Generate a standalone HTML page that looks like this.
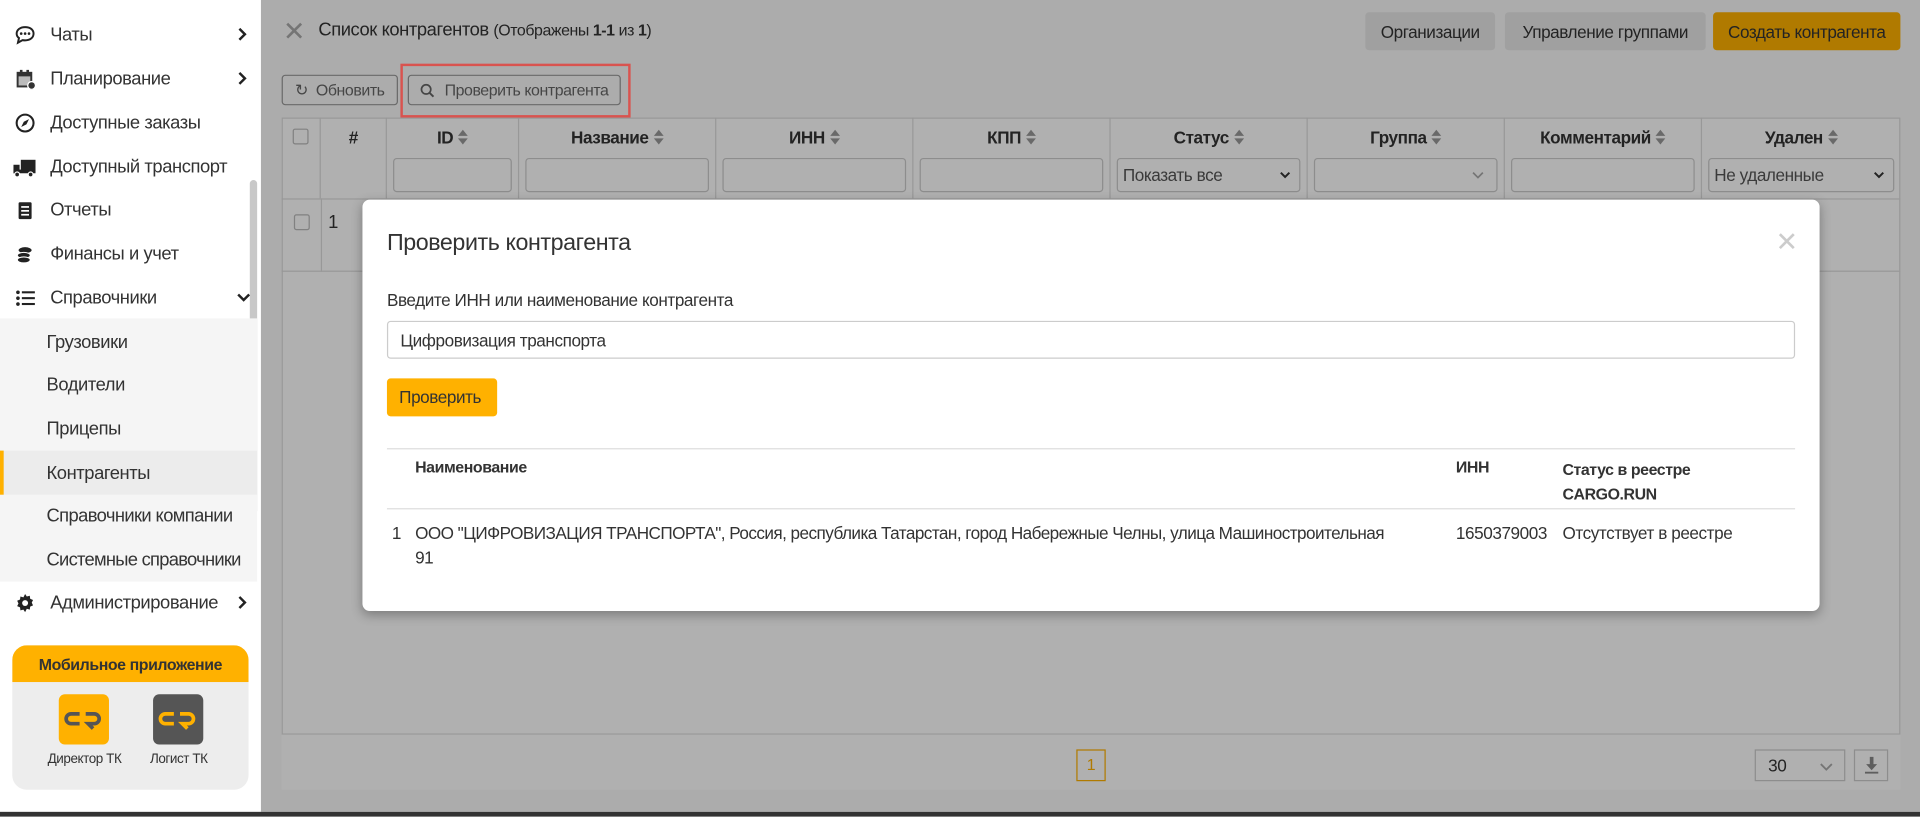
<!DOCTYPE html>
<html><head><meta charset="utf-8">
<style>
*{box-sizing:border-box;margin:0;padding:0}
html,body{width:1920px;height:817px;overflow:hidden;background:#fff;font-family:"Liberation Sans","Noto Sans CJK SC",sans-serif;color:#333}
#w{position:absolute;left:0;top:0;width:1568px;height:667px;transform:scale(1.22449);transform-origin:0 0;overflow:hidden;letter-spacing:-0.35px}
.abs{position:absolute;white-space:nowrap}
.nav{position:absolute;left:0;width:213px;height:36px;font-size:15px;color:#333;display:flex;align-items:center;white-space:nowrap}
.nav .ic{position:absolute;left:12px;width:17px;height:17px}
.nav .t{position:absolute;left:41px}
.nav .ch{position:absolute;left:194px;top:12px;width:8px;height:12px}
.sub{position:absolute;left:0;width:205px;height:36px;font-size:15px;color:#333;display:flex;align-items:center;padding-left:38px;white-space:nowrap}
.btn{position:absolute;border-radius:3px;font-size:14px;display:flex;align-items:center;justify-content:center;white-space:nowrap}
.th{position:absolute;top:96px;height:66px;border-right:1px solid #ddd;font-size:14px;font-weight:bold;color:#333;text-align:center}
.th .l{margin-top:8px}
.th .f{position:absolute;left:5px;right:5px;top:33px;height:28px;border:1px solid #ccc;border-radius:3px;background:#fff;font-size:14px;font-weight:normal;text-align:left;padding:6px 4px;color:#555}
.sort{display:inline-block;width:8px;height:12px;vertical-align:-1px;margin-left:4px;position:relative}
.sort:before{content:"";position:absolute;left:0;top:0;border:4px solid transparent;border-bottom:5px solid #999;border-top:0}
.sort:after{content:"";position:absolute;left:0;top:7px;border:4px solid transparent;border-top:5px solid #999;border-bottom:0}
</style></head><body><div id="w">

<div class="abs" style="left:213px;top:0;width:1355px;height:663px;background:#fafafa"></div>
<div class="abs" style="left:231px;top:16px;font-size:22px;color:#aaa;line-height:20px">✕</div>
<div class="abs" style="left:260px;top:16px;font-size:15px;color:#333">Список контрагентов <span style="font-size:13px">(Отображены <b>1-1</b> из <b>1</b>)</span></div>
<div class="btn" style="left:1115px;top:10px;width:106px;height:31px;background:#e8e8e8;color:#333">Организации</div>
<div class="btn" style="left:1229px;top:10px;width:164px;height:31px;background:#e8e8e8;color:#333">Управление группами</div>
<div class="btn" style="left:1399px;top:10px;width:153px;height:31px;background:#ffb100;color:#333">Создать контрагента</div>
<div class="btn" style="left:230px;top:61px;width:95px;height:25px;border:1px solid #999;font-size:13px;color:#666">↻&nbsp; Обновить</div>
<div class="btn" style="left:333px;top:61px;width:174px;height:25px;border:1px solid #999;font-size:13px;color:#666">
<svg width="12" height="12" viewBox="0 0 12 12" style="margin-right:8px"><circle cx="5" cy="5" r="3.8" fill="none" stroke="#666" stroke-width="1.4"/><path d="M8 8l3 3" stroke="#666" stroke-width="1.6"/></svg>Проверить контрагента</div>

<div class="abs" style="left:230px;top:96px;width:1322px;height:504px;border:1px solid #ddd;background:#fff"></div>
<div class="abs" style="left:230px;top:162px;width:1322px;height:60px;border-bottom:1px solid #ddd;border-top:1px solid #ddd"></div>
<div class="th" style="left:230px;width:32px"><div style="width:13px;height:13px;border:1px solid #bbb;border-radius:2px;margin:9px auto"></div></div>
<div class="th" style="left:262px;width:54px"><div class="l">#</div></div>
<div class="th" style="left:316px;width:108px"><div class="l">ID<span class="sort"></span></div><div class="f"></div></div>
<div class="th" style="left:424px;width:161px"><div class="l">Название<span class="sort"></span></div><div class="f"></div></div>
<div class="th" style="left:585px;width:161px"><div class="l">ИНН<span class="sort"></span></div><div class="f"></div></div>
<div class="th" style="left:746px;width:161px"><div class="l">КПП<span class="sort"></span></div><div class="f"></div></div>
<div class="th" style="left:907px;width:161px"><div class="l">Статус<span class="sort"></span></div><div class="f" style="padding:5px 4px">Показать все<svg style="position:absolute;right:7px;top:10px" width="9" height="6" viewBox="0 0 9 6"><path d="M1 1l3.5 3.5L8 1" fill="none" stroke="#333" stroke-width="1.6"/></svg></div></div>
<div class="th" style="left:1068px;width:161px"><div class="l">Группа<span class="sort"></span></div><div class="f"><svg style="position:absolute;right:10px;top:10px" width="10" height="7" viewBox="0 0 10 7"><path d="M1 1l4 4 4-4" fill="none" stroke="#aaa" stroke-width="1.4"/></svg></div></div>
<div class="th" style="left:1229px;width:161px"><div class="l">Комментарий<span class="sort"></span></div><div class="f"></div></div>
<div class="th" style="left:1390px;width:162px;border-right:0"><div class="l">Удален<span class="sort"></span></div><div class="f" style="padding:5px 4px">Не удаленные<svg style="position:absolute;right:7px;top:10px" width="9" height="6" viewBox="0 0 9 6"><path d="M1 1l3.5 3.5L8 1" fill="none" stroke="#333" stroke-width="1.6"/></svg></div></div>
<div class="abs" style="left:240px;top:175px;width:13px;height:13px;border:1px solid #bbb;border-radius:2px"></div>
<div class="abs" style="left:262px;top:162px;width:1px;height:60px;background:#ddd"></div>
<div class="abs" style="left:268px;top:173px;font-size:15px">1</div>
<div class="abs" style="left:230px;top:600px;width:1322px;height:45px;background:#fff"></div>
<div class="abs" style="left:879px;top:612px;width:24px;height:26px;border:1px solid #ffb100;color:#ffb100;font-size:13px;text-align:center;line-height:24px">1</div>
<div class="abs" style="left:1433px;top:612px;width:74px;height:26px;border:1px solid #ccc;font-size:14px;padding:4px 10px">30<svg style="position:absolute;right:9px;top:10px" width="11" height="7" viewBox="0 0 11 7"><path d="M1 1l4.5 4.5L10 1" fill="none" stroke="#aaa" stroke-width="1.5"/></svg></div>
<div class="abs" style="left:1514px;top:612px;width:28px;height:26px;border:1px solid #ccc"><svg style="position:absolute;left:8px;top:5px" width="11" height="14" viewBox="0 0 11 14"><path d="M5.5 0v7" stroke="#888" stroke-width="3"/><path d="M1 6h9l-4.5 5z" fill="#888"/><path d="M0 13h11" stroke="#888" stroke-width="1.5"/></svg></div>

<div class="abs" style="left:213px;top:0;width:1355px;height:663px;background:rgba(0,0,0,0.31)"></div>
<div class="abs" style="left:327px;top:52px;width:188px;height:44px;border:2px solid #d9534f"></div>

<div class="abs" style="left:296px;top:163px;width:1190px;height:336px;background:#fff;border-radius:6px;box-shadow:0 3px 9px rgba(0,0,0,.3)">
 <div class="abs" style="left:20px;top:25px;font-size:19px;color:#333">Проверить контрагента</div>
 <div class="abs" style="left:1154px;top:22px;font-size:22px;color:#ccc">✕</div>
 <div class="abs" style="left:20px;top:74px;font-size:14px;color:#333">Введите ИНН или наименование контрагента</div>
 <div class="abs" style="left:20px;top:99px;width:1150px;height:31px;border:1px solid #ccc;border-radius:3px;font-size:14px;padding:7px 10px;color:#333">Цифровизация транспорта</div>
 <div class="abs" style="left:20px;top:146px;width:90px;height:31px;background:#ffb100;border-radius:3px;font-size:14px;padding:7px 10px;color:#333">Проверить</div>
 <div class="abs" style="left:20px;top:203px;width:1150px;height:1px;background:#ddd"></div>
 <div class="abs" style="left:43px;top:211px;font-size:13px;font-weight:bold">Наименование</div>
 <div class="abs" style="left:893px;top:211px;font-size:13px;font-weight:bold">ИНН</div>
 <div class="abs" style="left:980px;top:211px;font-size:13px;font-weight:bold;line-height:20px">Статус в реестре<br>CARGO.RUN</div>
 <div class="abs" style="left:20px;top:252px;width:1150px;height:1px;background:#ddd"></div>
 <div class="abs" style="left:24px;top:262px;font-size:14px;line-height:20px">1</div>
 <div class="abs" style="left:43px;top:262px;font-size:14px;line-height:20px;letter-spacing:-0.45px">ООО "ЦИФРОВИЗАЦИЯ ТРАНСПОРТА", Россия, республика Татарстан, город Набережные Челны, улица Машиностроительная<br>91</div>
 <div class="abs" style="left:893px;top:262px;font-size:14px;line-height:20px">1650379003</div>
 <div class="abs" style="left:980px;top:262px;font-size:14px;line-height:20px">Отсутствует в реестре</div>
</div>

<div class="abs" style="left:0;top:0;width:213px;height:663px;background:#fff"></div>
<div class="abs" style="left:204px;top:147px;width:6px;height:273px;background:#c8c8c8;border-radius:3px"></div>
<div class="nav" style="top:10px"><svg class="ic" viewBox="0 0 16 16"><path d="M8 2C4 2 1.5 4.3 1.5 7c0 1.5.7 2.6 1.8 3.4L2.5 14l3.5-2c.6.1 1.3.2 2 .2 4 0 6.5-2.3 6.5-5.2S12 2 8 2z" fill="none" stroke="#222" stroke-width="1.5"/><circle cx="5" cy="7" r="1" fill="#222"/><circle cx="8" cy="7" r="1" fill="#222"/><circle cx="11" cy="7" r="1" fill="#222"/></svg><span class="t">Чаты</span><svg class="ch" viewBox="0 0 8 12"><path d="M1.5 1.5L6 6l-4.5 4.5" fill="none" stroke="#222" stroke-width="2"/></svg></div>
<div class="nav" style="top:46px"><svg class="ic" viewBox="0 0 16 16"><rect x="1.5" y="2.5" width="12" height="12" fill="#333"/><rect x="3" y="6" width="9" height="7" fill="#bbb"/><rect x="4" y="1" width="2" height="3" fill="#333"/><rect x="9" y="1" width="2" height="3" fill="#333"/><circle cx="13" cy="13" r="3" fill="#333" stroke="#fff"/></svg><span class="t">Планирование</span><svg class="ch" viewBox="0 0 8 12"><path d="M1.5 1.5L6 6l-4.5 4.5" fill="none" stroke="#222" stroke-width="2"/></svg></div>
<div class="nav" style="top:82px"><svg class="ic" viewBox="0 0 16 16"><circle cx="8" cy="8" r="6.5" fill="none" stroke="#222" stroke-width="1.6"/><path d="M11 5L9 9 5 11 7 7z" fill="#222"/></svg><span class="t">Доступные заказы</span></div>
<div class="nav" style="top:118px"><svg class="ic" style="width:20px;left:10px" viewBox="0 0 20 16"><rect x="7" y="2" width="12" height="9" fill="#222"/><path d="M1 6h5v7H1z" fill="#222"/><rect x="1" y="10" width="18" height="3" fill="#222"/><circle cx="4" cy="14" r="2" fill="#222" stroke="#fff"/><circle cx="15" cy="14" r="2" fill="#222" stroke="#fff"/></svg><span class="t">Доступный транспорт</span></div>
<div class="nav" style="top:153px"><svg class="ic" viewBox="0 0 16 16"><rect x="3" y="2" width="10" height="13" rx="1" fill="#222"/><rect x="5" y="5" width="6" height="1.3" fill="#fff"/><rect x="5" y="8" width="6" height="1.3" fill="#fff"/><rect x="5" y="11" width="6" height="1.3" fill="#fff"/></svg><span class="t">Отчеты</span></div>
<div class="nav" style="top:189px"><svg class="ic" viewBox="0 0 16 16"><ellipse cx="8" cy="5" rx="5" ry="2.3" fill="#222"/><ellipse cx="7" cy="9" rx="5" ry="2.3" fill="#222" stroke="#fff" stroke-width=".8"/><ellipse cx="7" cy="12.5" rx="5" ry="2.3" fill="#222" stroke="#fff" stroke-width=".8"/></svg><span class="t">Финансы и учет</span></div>
<div class="nav" style="top:225px"><svg class="ic" viewBox="0 0 16 16"><g fill="#222"><circle cx="2.5" cy="3.5" r="1.4"/><circle cx="2.5" cy="8" r="1.4"/><circle cx="2.5" cy="12.5" r="1.4"/><rect x="5.5" y="2.7" width="10" height="1.6"/><rect x="5.5" y="7.2" width="10" height="1.6"/><rect x="5.5" y="11.7" width="10" height="1.6"/></g></svg><span class="t">Справочники</span><svg style="position:absolute;left:193px;top:14px" width="12" height="8" viewBox="0 0 12 8"><path d="M1.5 1.5L6 6l4.5-4.5" fill="none" stroke="#222" stroke-width="2"/></svg></div>
<div class="abs" style="left:0;top:260px;width:210px;height:215px;background:#f5f5f5"></div>
<div class="sub" style="top:261px">Грузовики</div>
<div class="sub" style="top:296px">Водители</div>
<div class="sub" style="top:332px">Прицепы</div>
<div class="sub" style="top:368px;background:#ececec;border-left:3px solid #ffb100;padding-left:35px;width:210px">Контрагенты</div>
<div class="sub" style="top:403px;letter-spacing:-0.5px">Справочники компании</div>
<div class="sub" style="top:439px;letter-spacing:-0.6px">Системные справочники</div>
<div class="nav" style="top:474px"><svg class="ic" viewBox="0 0 16 16"><path d="M8 1l1.3 2 2.3-.6.3 2.3 2.2.9-1 2.1 1 2.1-2.2.9-.3 2.3-2.3-.6L8 15l-1.3-2-2.3.6-.3-2.3-2.2-.9 1-2.1-1-2.1 2.2-.9.3-2.3 2.3.6z" fill="#222"/><circle cx="8" cy="8" r="2.3" fill="#fff"/></svg><span class="t">Администрирование</span><svg class="ch" viewBox="0 0 8 12"><path d="M1.5 1.5L6 6l-4.5 4.5" fill="none" stroke="#222" stroke-width="2"/></svg></div>

<div class="abs" style="left:10px;top:527px;width:193px;height:118px;background:#ededed;border-radius:12px;overflow:hidden">
 <div style="height:30px;background:#ffb100;font-size:13px;font-weight:bold;color:#333;text-align:center;line-height:31px">Мобильное приложение</div>
 <div class="abs" style="left:38px;top:40px;width:41px;height:41px;background:#ffb100;border-radius:5px"><svg width="41" height="41" viewBox="0 0 41 41"><path d="M17 16h-7a4 4 0 0 0 0 8h7M22 16h7a4 4 0 0 1 0 8h-5l4 4" fill="none" stroke="#555" stroke-width="3"/></svg></div>
 <div class="abs" style="left:115px;top:40px;width:41px;height:41px;background:#555;border-radius:5px"><svg width="41" height="41" viewBox="0 0 41 41"><path d="M17 16h-7a4 4 0 0 0 0 8h7M22 16h7a4 4 0 0 1 0 8h-5l4 4" fill="none" stroke="#ffb100" stroke-width="3"/></svg></div>
 <div class="abs" style="left:18px;top:87px;width:82px;text-align:center;font-size:11px">Директор ТК</div>
 <div class="abs" style="left:99px;top:87px;width:74px;text-align:center;font-size:11px">Логист ТК</div>
</div>
<div class="abs" style="left:0;top:663px;width:1568px;height:4px;background:#333"></div>
</div></body></html>
